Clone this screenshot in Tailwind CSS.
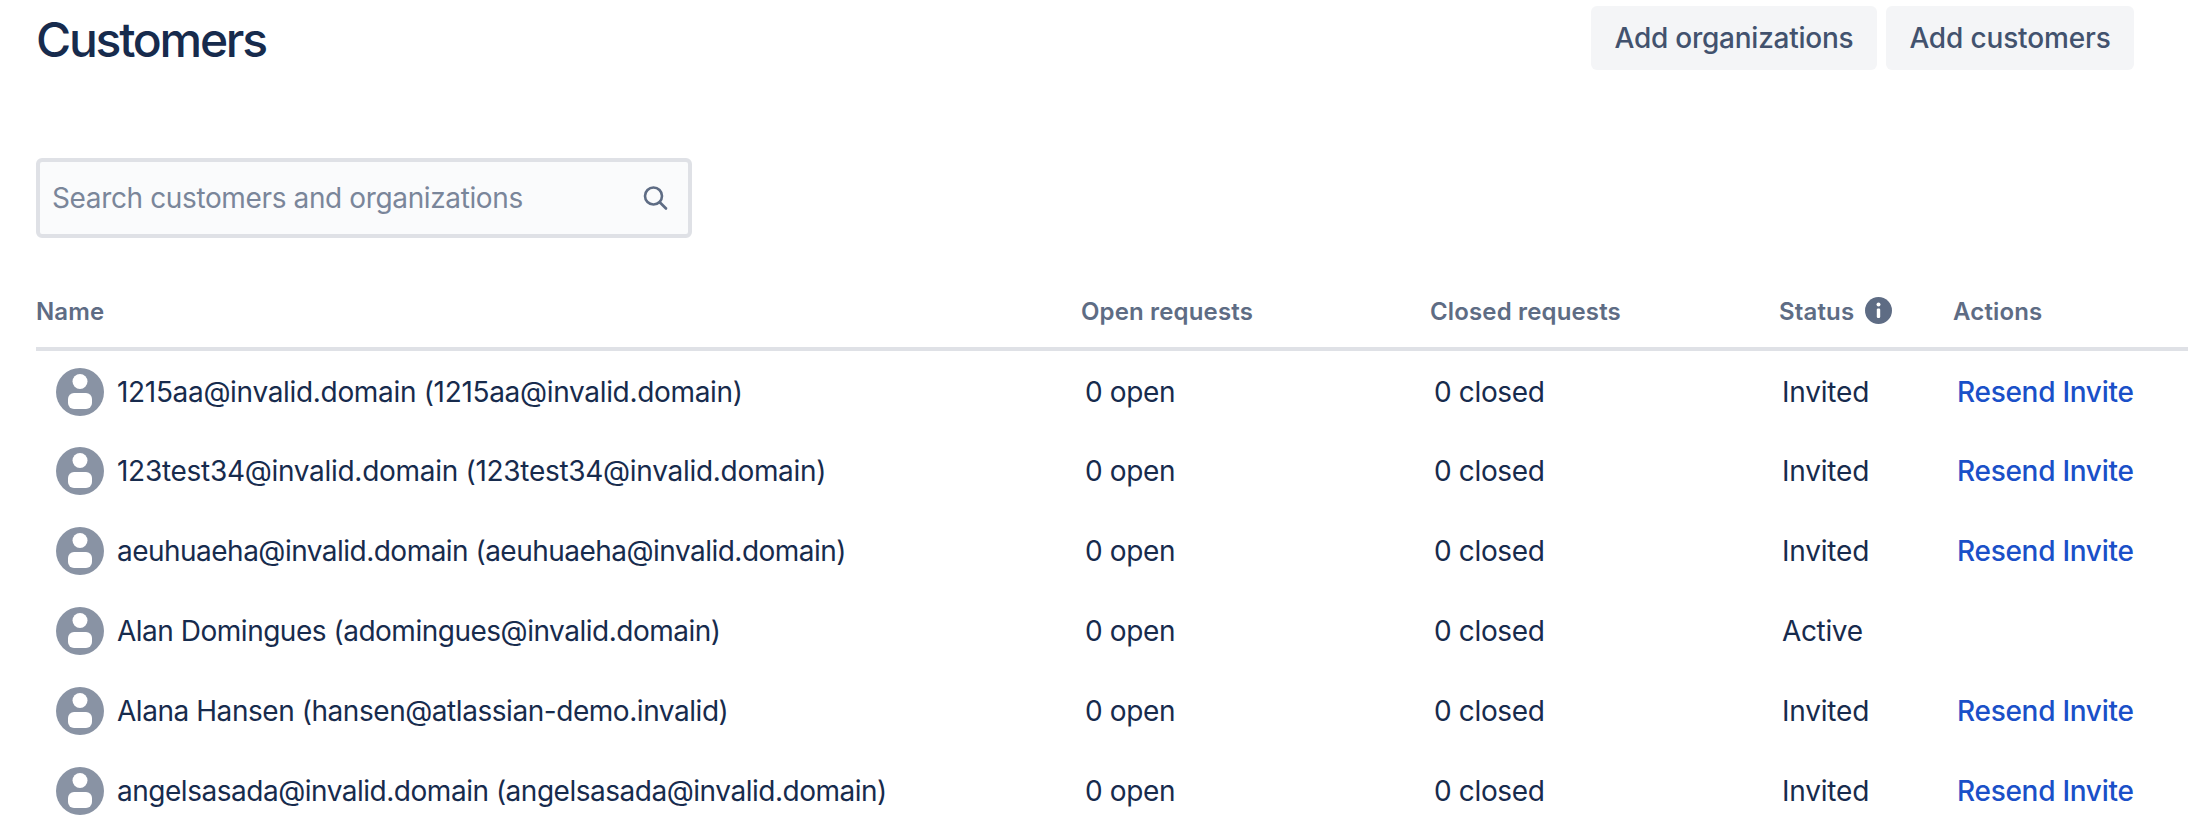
<!DOCTYPE html>
<html lang="en">
<head>
    <meta charset="UTF-8">
    <meta name="viewport" content="width=device-width, initial-scale=1.0">
    <title>Customers</title>
    <script src="https://cdn.jsdelivr.net/npm/@tailwindcss/browser@4"></script>
</head>
<body class="bg-white h-[818px] overflow-hidden font-['Inter',sans-serif] text-[#172b4d]">

    <!-- Header -->
    <div class="flex justify-between items-start pl-[36px] pr-[54px] pt-[6px]">
        <h1 class="text-[48px] leading-[68px] font-medium tracking-[-2.25px]">Customers</h1>
        <div class="flex gap-[9px]">
            <button class="h-[64px] w-[286px] rounded-md bg-[#f4f5f7] text-[#42526e] text-[28px] font-medium tracking-[-0.25px]">Add organizations</button>
            <button class="h-[64px] w-[248px] rounded-md bg-[#f4f5f7] text-[#42526e] text-[28px] font-medium tracking-[-0.15px]">Add customers</button>
        </div>
    </div>

    <!-- Search -->
    <div class="ml-[36px] mt-[84px] w-[656px] h-[80px] flex items-center justify-between pl-[12px] pr-[19px] border-[4px] border-[#dfe1e6] rounded-md bg-[#fafbfc]">
        <span class="text-[28px] tracking-[-0.37px] text-[#7a869a]">Search customers and organizations</span>
        <svg class="w-[28px] h-[28px]" viewBox="0 0 28 28" fill="none" stroke="#5e6c84" stroke-width="2.6" stroke-linecap="round">
            <circle cx="12.5" cy="12" r="8.5"/>
            <path d="M19 18.5l6 6"/>
        </svg>
    </div>

    <!-- Table -->
    <table class="mt-[39px] ml-[36px] w-[2152px] table-fixed border-collapse">
        <colgroup>
            <col class="w-[1045px]">
            <col class="w-[349px]">
            <col class="w-[349px]">
            <col class="w-[174px]">
            <col>
        </colgroup>
        <thead>
            <tr class="h-[72px] border-b-[4px] border-[#dfe1e6] text-left text-[24px] font-semibold text-[#5e6c84] tracking-[0.15px]">
                <th class="font-semibold">Name</th>
                <th class="font-semibold">Open requests</th>
                <th class="font-semibold">Closed requests</th>
                <th class="font-semibold">
                    <span class="flex items-center gap-[11px]">Status
                        <svg class="w-[27px] h-[27px] -mt-[4px]" viewBox="0 0 27 27">
                            <circle cx="13.5" cy="13.5" r="13.5" fill="#5e6c84"/>
                            <rect x="11.8" y="11.5" width="3.4" height="9.5" rx="1.2" fill="#fff"/>
                            <circle cx="13.5" cy="7.6" r="2" fill="#fff"/>
                        </svg>
                    </span>
                </th>
                <th class="font-semibold">Actions</th>
            </tr>
        </thead>
        <tbody class="text-[28px] tracking-[-0.35px]">
            <tr class="h-[82px] [&>td]:pt-[2px]">
                <td><div class="flex items-center gap-[13px] pl-[20px] tracking-[-0.32px]"><svg class="w-[48px] h-[48px] shrink-0" viewBox="0 0 48 48"><circle cx="24" cy="24" r="24" fill="#8993a4"/><circle cx="24" cy="13.5" r="7.5" fill="#fff"/><rect x="12" y="25" width="24" height="16" rx="6" fill="#fff"/></svg>1215aa@invalid.domain (1215aa@invalid.domain)</div></td>
                <td class="pl-[4px]">0 open</td>
                <td class="pl-[4px]">0 closed</td>
                <td class="pl-[3px] tracking-[-0.2px]">Invited</td>
                <td class="pl-[4px]"><a class="text-[#1a50c8] font-medium tracking-[-0.28px]" href="#">Resend Invite</a></td>
            </tr>
            <tr class="h-[80px]">
                <td><div class="flex items-center gap-[13px] pl-[20px] tracking-[-0.29px]"><svg class="w-[48px] h-[48px] shrink-0" viewBox="0 0 48 48"><circle cx="24" cy="24" r="24" fill="#8993a4"/><circle cx="24" cy="13.5" r="7.5" fill="#fff"/><rect x="12" y="25" width="24" height="16" rx="6" fill="#fff"/></svg>123test34@invalid.domain (123test34@invalid.domain)</div></td>
                <td class="pl-[4px]">0 open</td>
                <td class="pl-[4px]">0 closed</td>
                <td class="pl-[3px] tracking-[-0.2px]">Invited</td>
                <td class="pl-[4px]"><a class="text-[#1a50c8] font-medium tracking-[-0.28px]" href="#">Resend Invite</a></td>
            </tr>
            <tr class="h-[80px]">
                <td><div class="flex items-center gap-[13px] pl-[20px] tracking-[-0.52px]"><svg class="w-[48px] h-[48px] shrink-0" viewBox="0 0 48 48"><circle cx="24" cy="24" r="24" fill="#8993a4"/><circle cx="24" cy="13.5" r="7.5" fill="#fff"/><rect x="12" y="25" width="24" height="16" rx="6" fill="#fff"/></svg>aeuhuaeha@invalid.domain (aeuhuaeha@invalid.domain)</div></td>
                <td class="pl-[4px]">0 open</td>
                <td class="pl-[4px]">0 closed</td>
                <td class="pl-[3px] tracking-[-0.2px]">Invited</td>
                <td class="pl-[4px]"><a class="text-[#1a50c8] font-medium tracking-[-0.28px]" href="#">Resend Invite</a></td>
            </tr>
            <tr class="h-[80px]">
                <td><div class="flex items-center gap-[13px] pl-[20px] tracking-[-0.49px]"><svg class="w-[48px] h-[48px] shrink-0" viewBox="0 0 48 48"><circle cx="24" cy="24" r="24" fill="#8993a4"/><circle cx="24" cy="13.5" r="7.5" fill="#fff"/><rect x="12" y="25" width="24" height="16" rx="6" fill="#fff"/></svg>Alan Domingues (adomingues@invalid.domain)</div></td>
                <td class="pl-[4px]">0 open</td>
                <td class="pl-[4px]">0 closed</td>
                <td class="pl-[3px]">Active</td>
                <td></td>
            </tr>
            <tr class="h-[80px]">
                <td><div class="flex items-center gap-[13px] pl-[20px] tracking-[-0.45px]"><svg class="w-[48px] h-[48px] shrink-0" viewBox="0 0 48 48"><circle cx="24" cy="24" r="24" fill="#8993a4"/><circle cx="24" cy="13.5" r="7.5" fill="#fff"/><rect x="12" y="25" width="24" height="16" rx="6" fill="#fff"/></svg>Alana Hansen (hansen@atlassian-demo.invalid)</div></td>
                <td class="pl-[4px]">0 open</td>
                <td class="pl-[4px]">0 closed</td>
                <td class="pl-[3px] tracking-[-0.2px]">Invited</td>
                <td class="pl-[4px]"><a class="text-[#1a50c8] font-medium tracking-[-0.28px]" href="#">Resend Invite</a></td>
            </tr>
            <tr class="h-[80px]">
                <td><div class="flex items-center gap-[13px] pl-[20px] tracking-[-0.48px]"><svg class="w-[48px] h-[48px] shrink-0" viewBox="0 0 48 48"><circle cx="24" cy="24" r="24" fill="#8993a4"/><circle cx="24" cy="13.5" r="7.5" fill="#fff"/><rect x="12" y="25" width="24" height="16" rx="6" fill="#fff"/></svg>angelsasada@invalid.domain (angelsasada@invalid.domain)</div></td>
                <td class="pl-[4px]">0 open</td>
                <td class="pl-[4px]">0 closed</td>
                <td class="pl-[3px] tracking-[-0.2px]">Invited</td>
                <td class="pl-[4px]"><a class="text-[#1a50c8] font-medium tracking-[-0.28px]" href="#">Resend Invite</a></td>
            </tr>
        </tbody>
    </table>

</body>
</html>
